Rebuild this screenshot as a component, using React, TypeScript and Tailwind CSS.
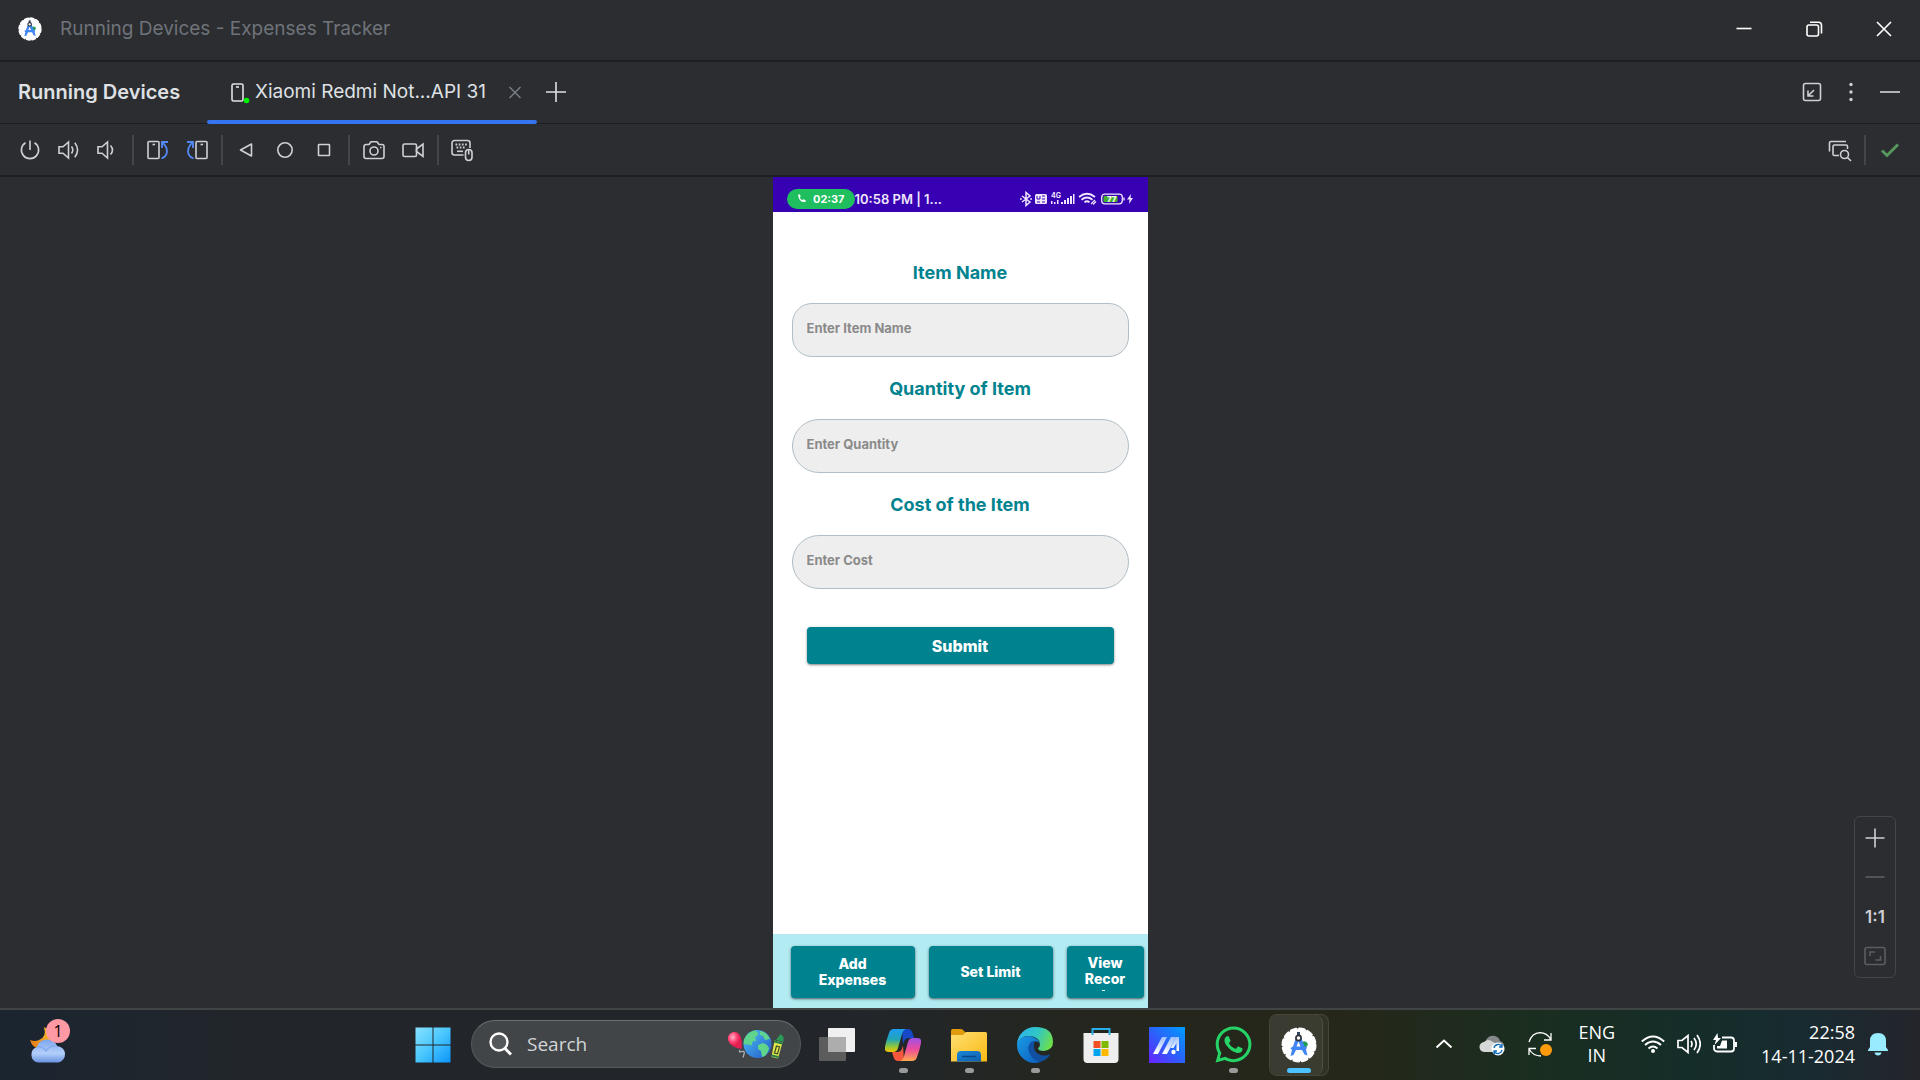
import type { ReactNode } from 'react';
import { FaWhatsapp } from 'react-icons/fa';

function Svg({ size = 24, className = '', children }: { size?: number; className?: string; children: ReactNode }) {
  return (
    <svg
      width={size}
      height={size}
      viewBox={`0 0 ${size} ${size}`}
      fill="none"
      stroke="currentColor"
      strokeWidth="1.6"
      className={`shrink-0 ${className}`}
      aria-hidden="true"
    >
      {children}
    </svg>
  );
}

function StudioMark({ size }: { size: number }) {
  return (
    <svg width={size} height={size} viewBox="0 0 36 36" aria-hidden="true">
      <circle cx="18" cy="18" r="16" fill="#fff" />
      <circle cx="18" cy="18" r="16" fill="none" stroke="#fff" strokeWidth="3" strokeDasharray="5 3.38" strokeLinecap="round" />
      <path d="M21 15q4-2 6 2-1 4-5 4z" fill="#1f9d55" />
      <path d="M15.500 9h4l4 10 2.500 1.500-1 2 1.500 6-3-1-2.500-4.500h-6L12.500 28l-3 1 1.500-6-1.500-2L12 19.500z" fill="#4285f4" />
      <path d="M17.500 14.500l2 5h-4z" fill="#fff" />
      <path d="M17.500 5v4" stroke="#30455f" strokeWidth="3" />
      <circle cx="17.500" cy="11" r="2.600" fill="#fff" stroke="#30343a" strokeWidth="1.700" />
    </svg>
  );
}

function ToolButton({ label, children }: { label: string; children: ReactNode }) {
  return (
    <button type="button" aria-label={label} className="flex size-6 items-center justify-center text-[#ced0d6]">
      {children}
    </button>
  );
}

function Divider() {
  return <div className="mx-3 h-[30px] w-0.5 bg-[#43454a]" />;
}

function TitleBar() {
  return (
    <header className="flex h-[62px] items-center border-b-2 border-[#1e1f22] pb-0.5 pl-[18px] pr-6">
      <StudioMark size={24} />
      <h1 className="ml-[18px] flex-1 text-[19px] leading-6 text-[#6f737a]">Running Devices - Expenses Tracker</h1>
      <div className="flex items-center gap-[46px] text-white">
        <button type="button" aria-label="Minimize" className="size-6">
          <Svg><path d="M4.500 11.500h15" /></Svg>
        </button>
        <button type="button" aria-label="Restore" className="size-6">
          <Svg>
            <rect x="5" y="8" width="11.500" height="11" rx="2" />
            <path d="M8 5.300h8.500a3 3 0 0 1 3 3v8.200" />
          </Svg>
        </button>
        <button type="button" aria-label="Close" className="size-6">
          <Svg><path d="M5 5l14 14M19 5L5 19" /></Svg>
        </button>
      </div>
    </header>
  );
}

function TabRow() {
  return (
    <div className="flex h-[62px] items-stretch border-b border-[#1e1f22] pl-[18px] pr-[18px] text-[#dfe1e5]">
      <h2 className="flex w-[189px] items-center pb-0.5 text-xl font-semibold leading-6">Running Devices</h2>
      <div className="relative flex w-[330px] items-center pb-0.5 pl-6">
        <Svg className="-ml-0.5">
          <rect x="3" y="4" width="11" height="17" rx="1.500" />
          <path d="M7 7h3" />
          <circle cx="17.500" cy="20.500" r="2.800" fill="#00f400" stroke="none" />
        </Svg>
        <button type="button" className="ml-0.5 flex-1 text-left text-[19px] leading-6">Xiaomi Redmi Not...API 31</button>
        <button type="button" aria-label="Close tab" className="mr-2.5 size-6 text-[#7d8087]">
          <Svg><path d="M6.500 7l11 11M17.500 7l-11 11" strokeWidth="1.400" /></Svg>
        </button>
        <span className="absolute inset-x-0 bottom-[-1px] h-1 rounded-sm bg-[#3574f0]" />
      </div>
      <button type="button" aria-label="Add device" className="ml-[7px] flex items-center pb-0.5">
        <Svg><path d="M2 12h20M12 2v20" /></Svg>
      </button>
      <div className="ml-auto flex items-center gap-[15px] pb-0.5">
        <ToolButton label="Dock">
          <Svg>
            <rect x="3.500" y="3.500" width="17" height="17" rx="2" />
            <path d="M14 10l-5.500 5.500M8 10.500v5.500h5.500" />
          </Svg>
        </ToolButton>
        <ToolButton label="Options">
          <Svg>
            <g fill="currentColor" stroke="none">
              <circle cx="12" cy="4.500" r="1.700" />
              <circle cx="12" cy="12" r="1.700" />
              <circle cx="12" cy="19.500" r="1.700" />
            </g>
          </Svg>
        </ToolButton>
        <ToolButton label="Hide"><Svg><path d="M2 12h20" strokeWidth="2" className="text-[#b0b3b8]" /></Svg></ToolButton>
      </div>
    </div>
  );
}

function Toolbar() {
  return (
    <div className="flex h-[53px] items-center border-b-2 border-[#1e1f22] pl-[18px] pr-[18px]">
      <div className="flex gap-[15px]">
        <ToolButton label="Power">
          <Svg><path d="M12 2.500v9.500M7.500 4.700a8.600 8.600 0 1 0 9 0" /></Svg>
        </ToolButton>
        <ToolButton label="Volume up">
          <Svg><path d="M2 8.800h4l5.500-4.800v16L6 15.200H2zM14.500 8.500q2.600 3.500 0 7M17.800 4.800q5.500 7.200 0 14.400" /></Svg>
        </ToolButton>
        <ToolButton label="Volume down">
          <Svg><path d="M2 8.800h4l5.500-4.800v16L6 15.200H2zM14.500 7.500q4 4.500 0 9" /></Svg>
        </ToolButton>
      </div>
      <Divider />
      <div className="flex gap-[15px]">
        <ToolButton label="Rotate left">
          <Svg>
            <rect x="2" y="3.500" width="11" height="17" rx="1" />
            <path d="M6.500 6.500h2.500" />
            <path d="M15.500 20.500q7-2.500 5-10.500q-1-3.500-4.500-5.500M16 10V4h6" stroke="#548af7" strokeWidth="1.800" />
          </Svg>
        </ToolButton>
        <ToolButton label="Rotate right">
          <Svg>
            <rect x="11" y="3.500" width="11" height="17" rx="1" />
            <path d="M15.500 6.500h2.500" />
            <path d="M8.500 20.500q-7-2.500-5-10.500q1-3.500 4.500-5.500M8 10V4H2" stroke="#548af7" strokeWidth="1.800" />
          </Svg>
        </ToolButton>
      </div>
      <Divider />
      <div className="-ml-px flex gap-[15px]">
        <ToolButton label="Back"><Svg><path d="M17.500 6v12L6.500 12z" strokeLinejoin="round" /></Svg></ToolButton>
        <ToolButton label="Home"><Svg><circle cx="12" cy="12" r="7.200" /></Svg></ToolButton>
        <ToolButton label="Overview"><Svg><rect x="6.500" y="6.500" width="11" height="11" rx="0.500" /></Svg></ToolButton>
      </div>
      <Divider />
      <div className="flex gap-[15px]">
        <ToolButton label="Take screenshot">
          <Svg>
            <path d="M2 8.500a2 2 0 0 1 2-2h3L9 3.700h6l2 2.800h3a2 2 0 0 1 2 2V18.500a2 2 0 0 1-2 2H4a2 2 0 0 1-2-2z" />
            <circle cx="12" cy="13" r="4" />
            <path d="M18 9.500h1.500" />
          </Svg>
        </ToolButton>
        <ToolButton label="Record screen">
          <Svg>
            <rect x="2" y="6" width="13.500" height="12.500" rx="1.500" />
            <path d="M15.500 11L22 6v12.500L15.500 13.500z" />
          </Svg>
        </ToolButton>
      </div>
      <Divider />
      <ToolButton label="Hardware input">
        <Svg>
          <path d="M12.500 17H3.500a2.500 2.500 0 0 1-2.500-2.500V5a2.500 2.500 0 0 1 2.500-2.500h13A2.500 2.500 0 0 1 19 5v5" />
          <path d="M4.500 6.500h11.500M5.500 9.500h9" strokeDasharray="1.700 1.500" strokeWidth="2" />
          <path d="M6 13.300h6" />
          <rect x="14.500" y="11.500" width="6.500" height="11" rx="3.200" />
          <path d="M17.700 12v4.500" />
        </Svg>
      </ToolButton>
      <div className="ml-auto flex items-center">
        <ToolButton label="Inspect UI">
          <Svg>
            <path d="M1.500 13.500V5a1.500 1.500 0 0 1 1.500-1.500h15" />
            <path d="M11 17.500H6.500A1.500 1.500 0 0 1 5 16V8.500A1.500 1.500 0 0 1 6.500 7H18a1.500 1.500 0 0 1 1.500 1.500V11" />
            <circle cx="16.500" cy="16.500" r="4" />
            <path d="M19.500 19.500l3.500 3.500" />
          </Svg>
        </ToolButton>
        <Divider />
        <ToolButton label="Device ready">
          <Svg><path d="M4 12.500l5 5L20 6.500" stroke="#57965c" strokeWidth="3" /></Svg>
        </ToolButton>
      </div>
    </div>
  );
}

function StatusBar() {
  return (
    <div className="flex h-[35px] items-center bg-[#3700b3] pl-3.5 pr-3.5 pt-2 text-[#efe6fb]">
      <span className="flex h-5 w-[68px] items-center justify-between rounded-full bg-[#1fbf5f] px-2.5 text-[11px] font-bold leading-5 text-white">
        <svg width="9" height="9" viewBox="0 0 9 9" aria-hidden="true">
          <path d="M1 0.500h2l.7 2.200-1 .9q.9 1.700 2.500 2.600l1-.9 2.300.7v2Q2 9 1 .500z" fill="#fff" />
        </svg>
        02:37
      </span>
      <span className="text-[13px] font-semibold leading-5">10:58 PM | 1...</span>
      <svg width="114" height="16" viewBox="0 0 114 16" className="ml-auto" fill="none" stroke="currentColor" aria-hidden="true">
        <path d="M2 5l8 6-4 3.500V1.500L10 5l-8 6M0 8h1.800M10.200 8H12" strokeWidth="1.500" />
        <rect x="15" y="3" width="12" height="10" rx="1.500" fill="currentColor" stroke="none" />
        <path d="M17 5v3h3V5M22 5h3M22 8h3M17 11h3M22 11h3" stroke="#3700b3" />
        <g fill="currentColor" stroke="none">
          <text x="31" y="7" fontSize="7" fontWeight="700" fontFamily="Inter, sans-serif">4G</text>
          <path d="M31 10h1.500v3H31zM34 11h1.500v2H34zM37 9h1.500v4H37zM41 11h2v2h-2zM44 9h2v4h-2zM47 7h2v6h-2zM50 5h2v8h-2zM53 3h1.500v10H53z" />
        </g>
        <path d="M59 6q8-6.500 16 0M61.500 8.700q5.500-4.500 11 0M64.500 11.300q2.500-2 5 0" strokeWidth="1.800" />
        <path d="M71 13l4-4M73 13.500l3-3" strokeWidth="1.200" />
        <rect x="81.700" y="3.200" width="20.600" height="9.600" rx="3" strokeWidth="1.300" />
        <rect x="83.500" y="5" width="14" height="6" rx="1" fill="#43b02a" stroke="none" />
        <text x="87" y="11" fontSize="8" fontWeight="800" fontFamily="Inter, sans-serif" fill="#fff" stroke="none">77</text>
        <path d="M104 6.500v3" strokeWidth="1.400" />
        <path d="M111 3l-4 5.500h2.500L109 13l4-6h-2.500z" fill="currentColor" stroke="none" />
      </svg>
    </div>
  );
}

function Field({ id, label, placeholder, shape }: { id: string; label: string; placeholder: string; shape: string }) {
  return (
    <div className="flex flex-col gap-[18px]">
      <label htmlFor={id} className="text-center text-[18px] font-bold leading-6 text-[#00838f]">{label}</label>
      <input
        id={id}
        type="text"
        placeholder={placeholder}
        className={`h-[54px] w-full border border-[#b0bec5] bg-[#eeeeee] px-3.5 pb-1 text-[13px] font-bold text-[#333] placeholder:text-[#8a8a8a] ${shape}`}
      />
    </div>
  );
}

function Phone() {
  return (
    <section className="flex w-[375px] flex-col bg-white" aria-label="Device screen">
      <StatusBar />
      <form className="flex flex-1 flex-col gap-5 px-[19px] pt-[49px]">
        <Field id="item" label="Item Name" placeholder="Enter Item Name" shape="rounded-[20px]" />
        <Field id="quantity" label="Quantity of Item" placeholder="Enter Quantity" shape="rounded-full" />
        <Field id="cost" label="Cost of the Item" placeholder="Enter Cost" shape="rounded-full" />
        <button type="button" className="mx-[15px] mt-[18px] h-[37px] rounded bg-[#00838f] text-base font-extrabold text-white shadow-sm shadow-black/40">
          Submit
        </button>
      </form>
      <nav className="flex h-[74px] items-start gap-[14px] bg-[#b2ebf2] pl-[18px] pr-1 pt-3 text-sm font-extrabold leading-4 text-white">
        <button type="button" className="flex h-[52px] w-[124px] items-center justify-center rounded bg-[#00838f] shadow-sm shadow-black/50">
          <span>Add<br />Expenses</span>
        </button>
        <button type="button" className="flex h-[52px] w-[124px] items-center justify-center rounded bg-[#00838f] shadow-sm shadow-black/50">
          Set Limit
        </button>
        <button type="button" className="flex h-[52px] flex-1 flex-col items-center rounded bg-[#00838f] pt-[9px] shadow-sm shadow-black/50">
          <span>View<br />Recor</span>
          <span className="ml-[-4px] mt-[3px] h-px w-[3px] bg-white" />
        </button>
      </nav>
    </section>
  );
}

function ZoomPanel() {
  return (
    <div className="absolute bottom-[30px] right-6 flex h-[162px] w-[42px] flex-col items-center justify-between rounded-md border border-[#43454a] py-[9px] text-[#ced0d6]">
      <button type="button" aria-label="Zoom in" className="size-6"><Svg><path d="M2.500 12h19M12 2.500v19" /></Svg></button>
      <button type="button" aria-label="Zoom out" className="size-6 text-[#5a5d63]"><Svg><path d="M2.500 12h19" /></Svg></button>
      <button type="button" className="text-[17px] font-semibold leading-6">1:1</button>
      <button type="button" aria-label="Fit to window" className="size-6 text-[#5a5d63]">
        <Svg>
          <rect x="2" y="3.500" width="20" height="17" rx="2" />
          <path d="M7 12V8h5M17.500 12v4h-5" />
        </Svg>
      </button>
    </div>
  );
}

function WeatherIcon() {
  return (
    <svg width="36" height="36" viewBox="0 0 36 36" aria-hidden="true">
      <defs>
        <linearGradient id="moon" x1="1" y1="0" x2="0" y2="1"><stop stopColor="#fbc531" /><stop offset="1" stopColor="#e67512" /></linearGradient>
        <linearGradient id="cloud" x1="0" y1="0" x2="0" y2="1"><stop stopColor="#7ea6ee" /><stop offset=".6" stopColor="#b3cffa" /><stop offset="1" stopColor="#6a93e0" /></linearGradient>
      </defs>
      <path d="M14 0q3 10-5 13-4 2-9 0 3 10 12 8Q24 17 20 5 18 2 14 0z" fill="url(#moon)" />
      <path d="M8 35.500a8 8 0 0 1-1-15.500Q9 12.500 17 12.500T27 19a8.300 8.300 0 0 1 1 16.500z" fill="url(#cloud)" />
      <path d="M7 20q6-1 9 4 4-6 11-5" fill="none" stroke="#86abf0" strokeWidth="1.500" />
    </svg>
  );
}

function TaskButton({ label, indicator = '', children }: { label: string; indicator?: string; children: ReactNode }) {
  return (
    <button type="button" aria-label={label} className="relative flex h-[70px] w-[66px] items-center justify-center pb-px">
      {children}
      {indicator && <span className={`absolute bottom-[7px] h-[5px] rounded-full ${indicator}`} />}
    </button>
  );
}

const idle = 'w-[9px] bg-[#9a9a9a]';

function SearchBox() {
  return (
    <label className="mb-0.5 ml-[5px] mr-[3px] flex h-12 w-[330px] items-center rounded-full border border-[#56595c] border-t-[#6c6f72] bg-[#424548] pl-4 pr-4">
      <Svg className="text-white">
        <circle cx="11" cy="10" r="8.500" fill="#55585b" strokeWidth="2.400" />
        <path d="M17 16.500l6 6" strokeWidth="3" />
      </Svg>
      <input
        type="text"
        aria-label="Search"
        placeholder="Search"
        className="ml-[15px] w-40 flex-1 bg-transparent font-['Open_Sans',sans-serif] text-[19px] leading-6 text-white placeholder:text-[#d2d4d5]"
      />
      <svg width="56" height="32" viewBox="0 0 56 32" aria-hidden="true">
        <defs>
          <radialGradient id="balloon" cx=".35" cy=".3"><stop stopColor="#ffb3cb" /><stop offset=".6" stopColor="#ff4272" /><stop offset="1" stopColor="#e21f52" /></radialGradient>
          <linearGradient id="globe" x1="0" y1="0" x2="1" y2="1"><stop stopColor="#4ec3f5" /><stop offset="1" stopColor="#2258c8" /></linearGradient>
        </defs>
        <path d="M0 12a6.500 6.500 0 0 1 12.500-3.500q2 5 1 12.500Q2 19 0 12z" fill="url(#balloon)" />
        <path d="M12 22q-2 3 2 1.500t1 6" fill="none" stroke="#b9bcbf" strokeWidth="1.200" />
        <circle cx="29.500" cy="16" r="14" fill="url(#globe)" />
        <path d="M17.500 9q4-6 10-6.500l3 3-2 3-2 1 2 3-4 1-1 4q-5-2-7.500-1-1-4 1.500-7.500zM30 17l5-2 4 2 2 3q0 3-4 8l-3 1-1-6-3-2zM32 3q7 1 10 8l-5 1-2-4-3-1z" fill="#5fd58c" />
        <path d="M46.500 12.500l8 2-4.500 16-6.500-1.500z" fill="#dfe64e" />
        <path d="M48 12l4.500-6 3 3v5z" fill="#2b9a57" />
        <path d="M46 13.500l8.500 2M43.700 27.500l6.500 1.500" stroke="#25804a" strokeWidth="2" />
        <path d="M48.500 18l3 .8-2 7-3-.800z" fill="none" stroke="#3d4a22" strokeWidth="1.200" />
      </svg>
    </label>
  );
}

function TaskIcons() {
  return (
    <>
      <TaskButton label="Task view">
        <svg width="36" height="36" viewBox="0 0 36 36" aria-hidden="true">
          <rect x="0" y="10" width="27" height="24" rx="1" fill="#5c5c5c" />
          <rect x="9" y="1" width="27" height="24" rx="1" fill="#f0f0f0" />
          <rect x="9" y="10" width="18" height="15" fill="#adadad" />
        </svg>
      </TaskButton>
      <TaskButton label="Copilot" indicator={idle}>
        <svg width="36" height="36" viewBox="0 0 36 36" aria-hidden="true">
          <defs>
            <linearGradient id="cpA" x1="0" y1="0" x2="0" y2="1"><stop stopColor="#1e9bf0" /><stop offset=".45" stopColor="#22a5b8" /><stop offset=".75" stopColor="#8cc63f" /><stop offset="1" stopColor="#f7c600" /></linearGradient>
            <linearGradient id="cpB" x1="0" y1="0" x2="0" y2="1"><stop stopColor="#9d50e8" /><stop offset=".5" stopColor="#ee4d9a" /><stop offset="1" stopColor="#ffa84d" /></linearGradient>
          </defs>
          <path d="M17 2h6q3.500 0 4.500 4l1.500 5h-5q-4 0-5 3.500l-1 3z" fill="#1648c8" />
          <path d="M19 34h-6q-3.500 0-4.500-4L7 25h5q4 0 5-3.500l1-3z" fill="#f4583c" />
          <path d="M9 2h12q-3 1-4 5l-4 14q-1 4-5 4H4q-5 0-4-5 1-6 4-14 1-4 5-4z" fill="url(#cpA)" />
          <path d="M27 34H15q3-1 4-5l4-14q1-4 5-4h4q5 0 4 5-1 6-4 14-1 4-5 4z" fill="url(#cpB)" />
        </svg>
      </TaskButton>
      <TaskButton label="File Explorer" indicator={idle}>
        <svg width="36" height="36" viewBox="0 0 36 36" aria-hidden="true">
          <defs>
            <linearGradient id="fold" x1="0" y1="0" x2="1" y2="1"><stop stopColor="#ffdf73" /><stop offset="1" stopColor="#f9b912" /></linearGradient>
            <linearGradient id="tray" x1="0" y1="0" x2="1" y2="1"><stop stopColor="#1b87d8" /><stop offset="1" stopColor="#0d5fae" /></linearGradient>
          </defs>
          <path d="M0 3.500q0-1.500 1.500-1.500H10q1 0 2 1l3 3v6H0z" fill="#e09c0c" />
          <path d="M0 8h11q1.500 0 2.500-1.500L15 5h19.500Q36 5 36 6.500V34.500H0z" fill="url(#fold)" />
          <path d="M6 34.500V28q0-4 4-4h16q4 0 4 4v6.500z" fill="url(#tray)" />
          <path d="M11 29.500h14" stroke="#0a4786" strokeWidth="1.500" />
        </svg>
      </TaskButton>
      <TaskButton label="Microsoft Edge" indicator={idle}>
        <svg width="36" height="36" viewBox="0 0 36 36" aria-hidden="true">
          <defs>
            <linearGradient id="edA" x1="0" y1=".3" x2="1" y2=".6"><stop stopColor="#2fb4ee" /><stop offset=".5" stopColor="#2fc6c6" /><stop offset="1" stopColor="#6fe048" /></linearGradient>
            <linearGradient id="edB" x1="0" y1="0" x2="1" y2="1"><stop stopColor="#1a9be8" /><stop offset="1" stopColor="#0b5cb8" /></linearGradient>
          </defs>
          <path d="M0 17A18 18 0 0 1 18 0q18 0 18 15 0 8-9 9-6 0-6-3 2-1 2-4-1-8-12-8Q4 9 0 17z" fill="url(#edA)" />
          <path d="M0 17q3-8 12-8 9 1 11 8-3-4-7-2-6 4-2 12 3 6 10 7.500-3 1.500-6 1.500A18 18 0 0 1 0 18z" fill="url(#edB)" />
          <path d="M14 15q-4 4-2 10 3 8 11 10 7-2 10.500-8-6 3-12 0-5-3-4.500-8 0-3 1-5-2 0-4 1z" fill="#1150a0" />
        </svg>
      </TaskButton>
      <TaskButton label="Microsoft Store">
        <svg width="36" height="36" viewBox="0 0 36 36" aria-hidden="true">
          <path d="M.500 6h35v26q0 4-4 4h-27q-4 0-4-4z" fill="#eeeeee" />
          <path d="M9.500 8V2h17v6" fill="none" stroke="#28aee8" strokeWidth="2" />
          <rect x="10.500" y="14" width="7" height="7" fill="#f25022" />
          <rect x="18.500" y="14" width="7" height="7" fill="#7fba00" />
          <rect x="10.500" y="22" width="7" height="7" fill="#00a4ef" />
          <rect x="18.500" y="22" width="7" height="7" fill="#ffb900" />
        </svg>
      </TaskButton>
      <TaskButton label="MyASUS">
        <svg width="36" height="36" viewBox="0 0 36 36" aria-hidden="true">
          <defs>
            <linearGradient id="asus" x1="0" y1="1" x2="1" y2="0"><stop stopColor="#6a22ff" /><stop offset=".5" stopColor="#2a62fa" /><stop offset="1" stopColor="#009dff" /></linearGradient>
            <linearGradient id="asusStroke" x1="0" y1="0" x2="0" y2="1"><stop stopColor="#9fc0ff" /><stop offset="1" stopColor="#fff" /></linearGradient>
          </defs>
          <path d="M0 0h36v36H0z" fill="url(#asus)" />
          <path d="M13 10h5L9 27H4z" fill="url(#asusStroke)" />
          <path d="M22 10h5l-9 17h-5z" fill="url(#asusStroke)" />
          <path d="M27 10h3v14h-2.500v-8l-3 5h-3z" fill="url(#asusStroke)" />
          <circle cx="24.500" cy="25" r="2.200" fill="#fff" />
        </svg>
      </TaskButton>
      <TaskButton label="WhatsApp" indicator={idle}>
        <FaWhatsapp size={41} color="#25d366" />
      </TaskButton>
      <TaskButton label="Android Studio" indicator="w-6 bg-[#4cc2ff]">
        <span className="absolute inset-y-1 left-[3px] flex w-[60px] rounded-lg border border-white/10 bg-white/5">
          <span className="w-[53px] rounded-lg border-r border-white/10 bg-white/5" />
        </span>
        <span className="relative"><StudioMark size={36} /></span>
      </TaskButton>
    </>
  );
}

function Tray() {
  return (
    <div className="flex items-center justify-end pb-0.5 pr-[31px] text-white">
      <button type="button" aria-label="Show hidden icons" className="mr-6 size-6"><Svg><path d="M4.500 15.500L12 8.500l7.500 7" strokeWidth="2" /></Svg></button>
      <button type="button" aria-label="OneDrive" className="mr-6 size-6">
        <Svg className="overflow-visible">
          <path d="M6 8q3-5 9-4 4 1 5 5 4 1 4 5H8z" fill="#85898a" stroke="none" />
          <path d="M5 20a5 5 0 0 1-1-10q4-4 9 0l6 3v7z" fill="#d6d8d8" stroke="none" />
          <circle cx="18" cy="17" r="6.500" fill="#fff" stroke="none" />
          <path d="M14 16a4.200 4.200 0 0 1 8-1M22 18a4.200 4.200 0 0 1-8 1M22 12v3h-3M14 22v-3h3" stroke="#0f6cbd" strokeWidth="1.300" />
        </Svg>
      </button>
      <button type="button" aria-label="Windows Update" className="mr-[26px] size-6">
        <Svg className="overflow-visible">
          <path d="M1 10Q4 1 12 .700q7 0 11 7M23 1v7h-7M1 23v-6.500h7M1 17q4 7 12 7" strokeWidth="1.300" />
          <circle cx="18" cy="18" r="6" fill="#ff9a0a" stroke="none" />
        </Svg>
      </button>
      <button type="button" className="mr-[26px] text-center text-[18px] leading-[23px]">ENG<br />IN</button>
      <button type="button" aria-label="Network, volume and battery" className="mr-6 flex gap-3">
        <Svg>
          <path d="M.800 9.500q11.200-10 22.400 0M4 13q8-7 16 0M7.500 16.500q4.500-4 9 0" strokeWidth="1.800" />
          <circle cx="12" cy="19" r="2" fill="currentColor" stroke="none" />
        </Svg>
        <Svg><path d="M1 8.500h4L11 3.500v17L5 15.500H1zM14 9q2 3 0 6M17 6q4.500 6 0 12M20 3q6.500 9 0 18" strokeWidth="1.700" /></Svg>
        <Svg>
          <path d="M9 5.500h9a3 3 0 0 1 3 3v8a3 3 0 0 1-3 3H4a3 3 0 0 1-3-3V13" strokeWidth="1.800" />
          <path d="M21.500 10H24v5h-2.500zM9 8.500h5v8H4V14h3z" fill="currentColor" stroke="none" />
          <path d="M4.500 1L0 8h3L1.500 13 8 6H5z" fill="currentColor" stroke="none" />
        </Svg>
      </button>
      <button type="button" className="mr-3 whitespace-nowrap text-right text-[18px] leading-6">22:58<br />14-11-2024</button>
      <button type="button" aria-label="Notifications">
        <svg width="22" height="24" viewBox="0 0 22 24" aria-hidden="true">
          <path d="M11 1q8 0 8 8v6l2 3v1H1v-1l2-3V9q0-8 8-8zM7.500 20.500h7q-.5 3-3.500 3t-3.500-3z" fill="#99ebff" />
        </svg>
      </button>
    </div>
  );
}

function Taskbar() {
  return (
    <footer className="grid h-[72px] grid-cols-[400fr_auto_588fr] border-t-2 border-[#414445] bg-[linear-gradient(90deg,#1b2530_0%,#22262a_14%,#22262b_44%,#25261d_58%,#25271a_70%,#1a2e20_80%,#152d29_88%,#182b31_94%,#24252b_100%)] font-['Open_Sans',sans-serif]">
      <div className="flex items-center pb-px pl-[30px]">
        <button type="button" aria-label="Weather" className="relative">
          <WeatherIcon />
          <span className="absolute -right-1 -top-2 size-6 rounded-full bg-[#ff99a4] text-center text-base leading-6 text-black">1</span>
        </button>
      </div>
      <div className="flex items-center">
        <TaskButton label="Start">
          <svg width="36" height="36" viewBox="0 0 36 36" aria-hidden="true">
            <defs>
              <linearGradient id="win" x1="0" y1="0" x2="36" y2="36" gradientUnits="userSpaceOnUse"><stop stopColor="#8be3ff" /><stop offset=".5" stopColor="#48c6fd" /><stop offset="1" stopColor="#0a93fb" /></linearGradient>
            </defs>
            <path d="M.500.500h17v17H.500zM18.500.500h17v17h-17zM.500 18.500h17v17H.500zM18.500 18.500h17v17h-17z" fill="url(#win)" />
          </svg>
        </TaskButton>
        <SearchBox />
        <TaskIcons />
      </div>
      <Tray />
    </footer>
  );
}

export default function App() {
  return (
    <div className="flex min-h-screen flex-col bg-[#2b2d30] font-['Inter',sans-serif]">
      <TitleBar />
      <TabRow />
      <Toolbar />
      <main className="relative flex flex-1 justify-center">
        <Phone />
        <ZoomPanel />
      </main>
      <Taskbar />
    </div>
  );
}
